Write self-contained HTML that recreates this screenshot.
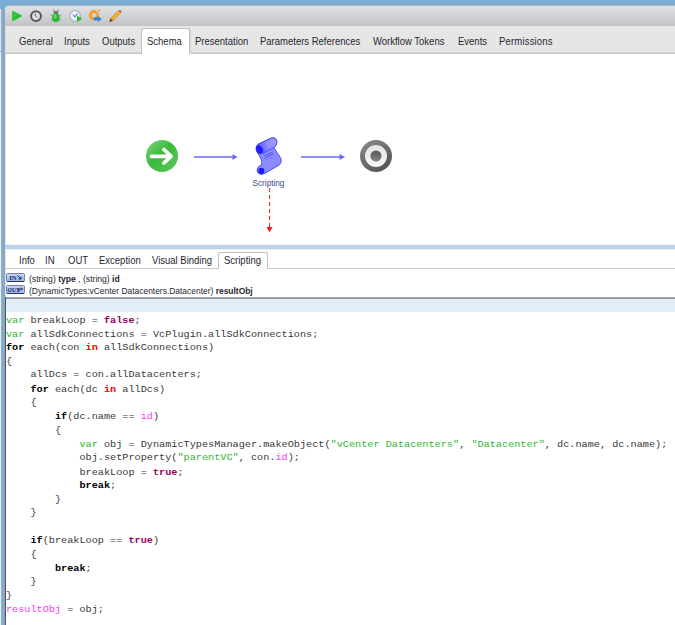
<!DOCTYPE html>
<html><head><meta charset="utf-8">
<style>
*{margin:0;padding:0;box-sizing:border-box}
html,body{width:675px;height:625px;overflow:hidden;background:#7bacd6;font-family:"Liberation Sans",sans-serif;position:relative}
.a{position:absolute}
.tab{position:absolute;font-size:10.3px;color:#262630;white-space:nowrap;line-height:11px;transform:scaleX(0.922);transform-origin:0 0}
.iot{position:absolute;font-size:8.6px;color:#262630;white-space:nowrap;line-height:10px}
.iot b{font-weight:bold}
pre{position:absolute;left:6px;top:299.6px;font-family:"Liberation Mono",monospace;font-size:10.21px;line-height:15.291px;transform:scaleY(0.9);transform-origin:0 0;color:#383838}
.kv{color:#2eb82e}
.kb{font-weight:bold;color:#000}
.kr{font-weight:bold;color:#f00}
.kc{font-weight:bold;color:#9a005e}
.ks{color:#2eb82e}
.km{color:#ff33ff}
</style></head><body>
<!-- left light column -->
<div class="a" style="left:0;top:9px;width:1px;height:42px;background:#e2e2e2"></div><div class="a" style="left:0;top:51px;width:1px;height:1px;background:#909090"></div><div class="a" style="left:0;top:52px;width:1px;height:573px;background:#f2f0ee"></div><div class="a" style="left:1px;top:9px;width:1px;height:616px;background:#98aec4"></div><div class="a" style="left:4px;top:9px;width:1px;height:616px;background:#8ca6c0"></div>
<!-- panel -->
<div class="a" style="left:8px;top:5px;width:667px;height:1px;background:#a6b6c6"></div>
<div class="a" style="left:5px;top:6px;width:670px;height:619px;background:#fff;border-top-left-radius:4px;overflow:hidden">
  <div class="a" style="left:0;top:0;width:670px;height:20px;background:linear-gradient(#e0e1e5,#c2c3c7)"></div>
  <div class="a" style="left:0;top:20px;width:670px;height:28px;background:#e6e6e6"></div><div class="a" style="left:0;top:46px;width:670px;height:1px;background:#d4d4d4"></div><div class="a" style="left:0;top:47px;width:670px;height:1px;background:#c6c6c6"></div>
</div>
<div class="a" style="left:5px;top:54px;width:1px;height:243px;background:#e4e4e4"></div><div class="a" style="left:5px;top:26px;width:1px;height:26px;background:#dcdcdc"></div>
<!-- toolbar icons -->
<svg class="a" style="left:0;top:0" width="140" height="26" viewBox="0 0 140 26">
  <path d="M12.2 11.6 Q12.2 10.6 13.1 11.1 L21.6 15.4 Q22.3 15.9 21.6 16.4 L13.1 20.9 Q12.2 21.4 12.2 20.4 Z" fill="#24c024"/><path d="M13 12.5 L18 15.2 L13 17" fill="#4cd04c" opacity="0.6"/>
  <circle cx="36" cy="16.1" r="4.9" fill="#e2e2e2" stroke="#555" stroke-width="2"/>
  <path d="M35 13.4 Q34.8 16 37.2 17.6" fill="none" stroke="#555" stroke-width="1"/>
  <path d="M53.5 9.5 L54.5 12.5 M58.5 9.5 L57.5 12.5 M50.8 15 L52.5 15.8 M61 15 L59.3 15.8 M51 20 L52.5 19.3 M60.8 20 L59.3 19.3" stroke="#707070" stroke-width="0.8"/>
  <ellipse cx="56" cy="12.6" rx="2.5" ry="1.7" fill="#707070"/>
  <ellipse cx="55.9" cy="17.8" rx="3.8" ry="4.3" fill="#28b828"/>
  <ellipse cx="55.2" cy="16.5" rx="1.4" ry="2.2" fill="#6fd66f"/>
  <circle cx="75.2" cy="16" r="5.3" fill="#eef4fa" stroke="#a4b8cc" stroke-width="1.3"/>
  <path d="M73 14.5 L74.8 17 L77.3 13.5" stroke="#4a5a80" stroke-width="1" fill="none"/>
  <path d="M77 15.6 L82.2 18.8 L77 22 Z" fill="#2eb82e"/>
  <circle cx="94" cy="15.3" r="3.7" fill="none" stroke="#f59a1c" stroke-width="2.6" stroke-dasharray="22.2 1.05" transform="rotate(-38 94 15.3)"/>
  <circle cx="99.1" cy="10.4" r="1.1" fill="#f59a1c"/>
  <path d="M94 17.2 L98 17.2 L98 16 L101.8 19 L98 22 L98 20.6 L94 20.6 Z" fill="#2a8ae0"/>
  <path d="M109.5 21.8 L110.6 18.5 L118.5 10.5 L120.8 12.8 L112.8 20.8 Z" fill="#f0b232" stroke="#c07a12" stroke-width="0.6"/>
  <path d="M109.5 21.8 L110.6 18.5 L112.8 20.8 Z" fill="#444"/>
  <path d="M118.5 10.5 L120.8 12.8 L121.5 12 Q121.5 10.5 120 10 Z" fill="#b06060"/>
</svg>
<!-- top tabs -->
<div class="a" style="left:141px;top:28px;width:49px;height:26px;background:#fff;border:1px solid #c0c0c0;border-bottom:none;border-radius:3px 3px 0 0;box-shadow:1px 0 0 #d8d8d8"></div>
<span class="tab" style="left:19px;top:36.3px">General</span>
<span class="tab" style="left:64px;top:36.3px">Inputs</span>
<span class="tab" style="left:102px;top:36.3px">Outputs</span>
<span class="tab" style="left:147px;top:36.3px">Schema</span>
<span class="tab" style="left:195px;top:36.3px">Presentation</span>
<span class="tab" style="left:260px;top:36.3px">Parameters References</span>
<span class="tab" style="left:373px;top:36.3px">Workflow Tokens</span>
<span class="tab" style="left:457.5px;top:36.3px">Events</span>
<span class="tab" style="left:498.5px;top:36.3px;letter-spacing:0.2px">Permissions</span>
<!-- canvas -->
<svg class="a" style="left:0;top:0" width="675" height="245" viewBox="0 0 675 245">
  <defs>
    <linearGradient id="gg" x1="0" y1="0" x2="1" y2="1"><stop offset="0" stop-color="#80d880"/><stop offset="0.45" stop-color="#3cba3c"/><stop offset="1" stop-color="#5cc95c"/></linearGradient>
    <linearGradient id="eg" x1="0" y1="0" x2="0.7" y2="1"><stop offset="0" stop-color="#8c8c8c"/><stop offset="1" stop-color="#545454"/></linearGradient><linearGradient id="dg" x1="0" y1="0" x2="0" y2="1"><stop offset="0" stop-color="#555"/><stop offset="1" stop-color="#858585"/></linearGradient>
    <linearGradient id="wg" x1="0" y1="0" x2="0" y2="1"><stop offset="0" stop-color="#e2e2e2"/><stop offset="1" stop-color="#f8f8f8"/></linearGradient>
  </defs>
  <circle cx="162" cy="156" r="16" fill="url(#gg)"/>
  <path d="M151.5 156.3 L170.5 156.3 M164 149.5 L171 156.3 L164 163" fill="none" stroke="#fff" stroke-width="3.8" stroke-linecap="round" stroke-linejoin="round"/>
  <line x1="194" y1="157" x2="234" y2="157" stroke="#6b6bef" stroke-width="1.4"/>
  <path d="M232.5 154 L237.5 157 L232.5 160 Z" fill="#6b6bef"/>
  <line x1="301" y1="157" x2="341" y2="157" stroke="#6b6bef" stroke-width="1.4"/>
  <path d="M339.5 154 L345 157 L339.5 160 Z" fill="#6b6bef"/>
  <circle cx="376" cy="156" r="16" fill="url(#eg)"/>
  <circle cx="376" cy="156" r="11" fill="url(#wg)"/>
  <circle cx="376" cy="156" r="5.6" fill="url(#dg)"/>
  <path d="M257.2 152.3 C255.5 149 256 145.5 258.5 144 L271 138.2 C274 137 277 139 276.8 142 C276.6 144.5 275.5 146.5 273.8 147.8 L280 157 C282 160 281.5 163.5 278.8 165.2 L265 173.2 C262 175 258 174.5 257.2 171 C256.8 168 258.5 166 261.5 165 C262.5 162 261 158 257.2 152.3 Z" fill="#8c8cff" stroke="#3a3aff" stroke-width="0.9"/>
  <defs><linearGradient id="rg" x1="256" y1="150" x2="276" y2="141" gradientUnits="userSpaceOnUse"><stop offset="0" stop-color="#2020ff"/><stop offset="0.25" stop-color="#6464ff"/><stop offset="0.6" stop-color="#9090ff"/><stop offset="1" stop-color="#9c9cff"/></linearGradient></defs>
  <path d="M256.8 151.5 C255.6 148.5 256.2 145.6 258.7 144.1 L271 138.3 C274 137 276.9 139 276.8 142 C276.7 144.6 275.4 146.6 273.6 147.7 L262.8 153.4 C260.3 154.5 257.8 153.7 256.8 151.5 Z" fill="url(#rg)" stroke="#3a3aff" stroke-width="0.8"/>
  <ellipse cx="259.6" cy="149.3" rx="3" ry="4.2" transform="rotate(-30 259.6 149.3)" fill="#1c1cff"/>
  <ellipse cx="261.3" cy="171" rx="3" ry="3.2" fill="#1a1aff"/>
  <path d="M264.4 155.9 L273 151.9 M264.7 158 L273.7 153.7" stroke="#4a4aff" stroke-width="0.9"/>
  <path d="M265.1 160 L274.5 156.6" stroke="#7a7aff" stroke-width="0.8"/>
  <text x="268.5" y="186" font-family="Liberation Sans" font-size="8.2" fill="#3a4690" text-anchor="middle">Scripting</text>
  <line x1="269.5" y1="188" x2="269.5" y2="227" stroke="#f42a2a" stroke-width="1.1" stroke-dasharray="4 3"/>
  <path d="M266.5 227 L272.5 227 L269.5 232.5 Z" fill="#f02020"/>
</svg>
<!-- splitter -->
<div class="a" style="left:5px;top:244px;width:670px;height:1px;background:#f0f4f9"></div><div class="a" style="left:5px;top:245px;width:670px;height:4px;background:#bcd4ea"></div><div class="a" style="left:5px;top:249px;width:670px;height:1px;background:#e6eef6"></div>
<!-- lower tabs -->
<div class="a" style="left:5px;top:268px;width:670px;height:1px;background:#c8c8c8"></div>
<div class="a" style="left:218px;top:252px;width:50px;height:17px;background:#fff;border:1px solid #c0c0c0;border-bottom:none;border-radius:3px 3px 0 0"></div>
<span class="tab" style="left:19px;top:255.4px">Info</span>
<span class="tab" style="left:45px;top:255.4px">IN</span>
<span class="tab" style="left:67.8px;top:255.4px">OUT</span>
<span class="tab" style="left:99px;top:255.4px">Exception</span>
<span class="tab" style="left:152px;top:255.4px">Visual Binding</span>
<span class="tab" style="left:224px;top:255.4px">Scripting</span>
<!-- IN / OUT -->
<svg class="a" style="left:6px;top:273px" width="19" height="22" viewBox="0 0 19 22">
  <defs><linearGradient id="ib" x1="0" y1="0" x2="0" y2="1"><stop offset="0" stop-color="#c4dcf2"/><stop offset="1" stop-color="#98b8dc"/></linearGradient></defs>
  <rect x="0.5" y="0.5" width="18" height="8" rx="1" fill="url(#ib)" stroke="#6676a8" stroke-width="0.9"/>
  <path d="M1 8.5 L18 8.5" stroke="#2c2c7c" stroke-width="1"/>
  <text x="3.2" y="6.6" font-family="Liberation Serif" font-size="6.6" font-weight="bold" fill="#1c1c70">IN</text>
  <path d="M11.5 2.5 L15 6 M15 3.5 L15 6 L12.5 6" stroke="#1c1c70" stroke-width="1" fill="none"/>
  <rect x="0.5" y="12.5" width="18" height="8" rx="1" fill="url(#ib)" stroke="#6676a8" stroke-width="0.9"/>
  <path d="M1 20.5 L18 20.5" stroke="#2c2c7c" stroke-width="1"/>
  <text x="1.6" y="18.6" font-family="Liberation Serif" font-size="5.6" font-weight="bold" fill="#1c1c70">OUT</text>
  <path d="M12.8 19 L12.8 16 L16.5 16 M15 14.5 L16.5 16 L15 17.5" stroke="#1c1c70" stroke-width="0.9" fill="none"/>
</svg>
<span class="iot" style="left:29px;top:274px">(string) <b>type</b> , (string) <b>id</b></span>
<span class="iot" style="left:29px;top:286px;transform:scaleX(0.982);transform-origin:0 0">(DynamicTypes:vCenter Datacenters.Datacenter) <b>resultObj</b></span>
<!-- editor -->
<div class="a" style="left:5px;top:297px;width:670px;height:1px;background:#a2aab2"></div>
<div class="a" style="left:5px;top:298px;width:670px;height:1px;background:#8c98a0"></div>
<div class="a" style="left:5px;top:297px;width:1px;height:328px;background:#4a5560"></div>
<div class="a" style="left:6px;top:299px;width:669px;height:13px;background:#e2eef7"></div>
<pre>

<span class="kv">var</span> breakLoop = <span class="kc">false</span>;
<span class="kv">var</span> allSdkConnections = VcPlugin.allSdkConnections;
<span class="kb">for</span> each(con <span class="kr">in</span> allSdkConnections)
{
    allDcs = con.allDatacenters;
    <span class="kb">for</span> each(dc <span class="kr">in</span> allDcs)
    {
        <span class="kb">if</span>(dc.name == <span class="km">id</span>)
        {
            <span class="kv">var</span> obj = DynamicTypesManager.makeObject(<span class="ks">"vCenter Datacenters"</span>, <span class="ks">"Datacenter"</span>, dc.name, dc.name);
            obj.setProperty(<span class="ks">"parentVC"</span>, con.<span class="km">id</span>);
            breakLoop = <span class="kc">true</span>;
            <span class="kb">break</span>;
        }
    }

    <span class="kb">if</span>(breakLoop == <span class="kc">true</span>)
    {
        <span class="kb">break</span>;
    }
}
<span class="km">resultObj</span> = obj;
</pre>
</body></html>
